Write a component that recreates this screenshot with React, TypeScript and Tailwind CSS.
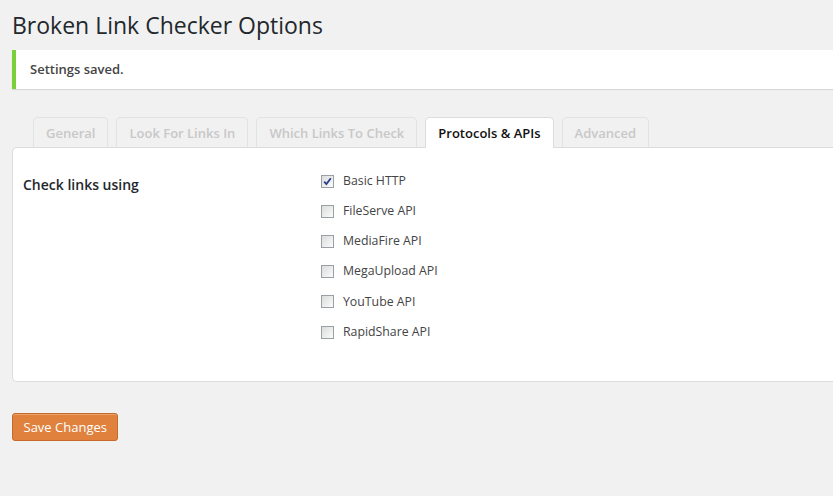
const tabs = [
  { label: "General", active: false },
  { label: "Look For Links In", active: false },
  { label: "Which Links To Check", active: false },
  { label: "Protocols & APIs", active: true },
  { label: "Advanced", active: false },
];

const apis = [
  { label: "Basic HTTP", checked: true },
  { label: "FileServe API", checked: false },
  { label: "MediaFire API", checked: false },
  { label: "MegaUpload API", checked: false },
  { label: "YouTube API", checked: false },
  { label: "RapidShare API", checked: false },
];

function Checkbox({ checked }: { checked: boolean }) {
  return (
    <span className="flex h-[13px] w-[13px] items-center justify-center border border-[#9a9fa4] bg-gradient-to-br from-[#dcdcdc] to-[#fbfbfb]">
      {checked && (
        <svg width="9" height="9" viewBox="0 0 9 9">
          <path d="M1.2 4.6 L3.4 7 L7.8 1.2" fill="none" stroke="#2a3d8f" strokeWidth="1.8" />
        </svg>
      )}
    </span>
  );
}

export default function App() {
  return (
    <div className="min-h-[496px] overflow-hidden bg-[#f1f1f1] pl-3 font-['Open_Sans',sans-serif] text-[#23282d]">
      <h1 className="pt-[10px] text-[23px] leading-[30px] font-normal">
        Broken Link Checker Options
      </h1>

      <div className="mt-[10px] flex h-[39px] items-center border-l-4 border-[#7ad03a] bg-white pl-[14px] shadow-[0_1px_1px_rgba(0,0,0,0.1)]">
        <p className="text-[13px] font-semibold text-[#444]">Settings saved.</p>
      </div>

      <div className="mt-[28px] flex gap-2 pl-[21px]">
        {tabs.map((t) =>
          t.active ? (
            <div
              key={t.label}
              className="relative z-10 -mb-px flex h-[31px] items-center rounded-t-[5px] border border-b-0 border-[#dcdcdc] bg-white px-[12px] pt-[2px] text-[13px] font-semibold text-[#111]"
            >
              {t.label}
            </div>
          ) : (
            <div
              key={t.label}
              className="flex h-[30px] items-center rounded-t-[5px] border border-b-0 border-[#e2e2e2] bg-[#f1f1f1] px-[12px] pt-[2px] text-[13px] font-semibold text-[#c8c8c8]"
            >
              {t.label}
            </div>
          )
        )}
      </div>

      <div className="flex rounded-tl-[5px] rounded-bl-[5px] border border-r-0 border-[#dcdcdc] bg-white pt-[18px] pb-[34px] pl-[10px]">
        <div className="w-[298px] pt-[7px] text-[14px] leading-[24px] font-semibold text-[#23282d]">
          Check links using
        </div>
        <div className="flex flex-col">
          {apis.map((a) => (
            <label key={a.label} className="flex h-[30.2px] items-center gap-[9px] text-[12.3px] text-[#444]">
              <Checkbox checked={a.checked} />
              {a.label}
            </label>
          ))}
        </div>
      </div>

      <button className="mt-[31px] h-[28px] rounded-[3px] border border-[#c7692a] bg-[#e0823d] px-[10.5px] pt-[2px] text-[13px] text-white shadow-[inset_0_1px_0_rgba(255,255,255,0.25)]">
        Save Changes
      </button>
    </div>
  );
}
